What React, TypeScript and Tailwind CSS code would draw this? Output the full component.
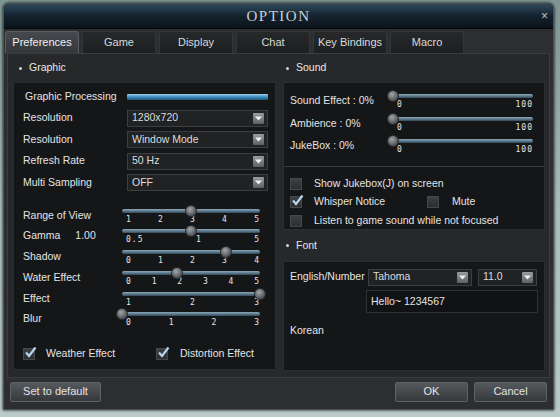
import React from "react";

const tabs = ["Preferences", "Game", "Display", "Chat", "Key Bindings", "Macro"];

const Arrow = () => (
  <div className="w-[11px] h-[11px] rounded-[1px] bg-gradient-to-b from-[#9a9ca0] to-[#5d6064] flex items-center justify-center">
    <svg width="7" height="5" viewBox="0 0 7 5">
      <path d="M0 0.5 L7 0.5 L3.5 4.5 Z" fill="#f2f2f2" />
    </svg>
  </div>
);

const Dropdown = ({ value, className }: { value: string; className: string }) => (
  <div
    className={`h-[17px] flex items-center justify-between pl-[4px] pr-[3px] bg-[#202224] border border-[#3c3f42] text-[#dcdcdc] ${className}`}
  >
    <span>{value}</span>
    <Arrow />
  </div>
);

const Check = ({ checked }: { checked: boolean }) => (
  <div className="w-[12px] h-[12px] bg-gradient-to-b from-[#3c3f43] to-[#2c2e31] border border-[#45484c] relative shrink-0">
    {checked && (
      <svg className="absolute left-[0px] top-[-3px]" width="13" height="13" viewBox="0 0 13 13">
        <path d="M2 6.5 L5 10 L11.5 1.5" stroke="#b9d4ea" strokeWidth="2.2" fill="none" />
      </svg>
    )}
  </div>
);

const Slider = ({
  pos,
  labels,
  width,
}: {
  pos: number;
  labels: string[];
  width: number;
}) => (
  <div className="relative shrink-0" style={{ width }}>
    <div className="h-[4px] mt-[5px] rounded-full bg-gradient-to-b from-[#8fa9bb] via-[#5d7a8e] to-[#34495a]" />
    <div
      className="absolute top-[1px] w-[12px] h-[12px] rounded-full bg-[radial-gradient(circle_at_40%_35%,#a3a5a8,#5b5e62_60%,#3b3d40)] border border-[#2a2c2e]"
      style={{ left: `calc(${pos * 100}% - 6px)` }}
    />
    <div className="flex justify-between pl-[4px] pr-[0px] mt-[3px] text-[8px] leading-[8px] tracking-[1px] text-[#e6e6e6] font-['DejaVu_Sans_Mono',monospace]">
      {labels.map((l, i) => (
        <span key={i}>{l}</span>
      ))}
    </div>
  </div>
);

const SliderRow = ({
  label,
  extra,
  pos,
  labels,
}: {
  label: string;
  extra?: string;
  pos: number;
  labels: string[];
}) => (
  <div className="h-[20.8px] flex items-start">
    <div className="w-[99px] pt-[4px] flex">
      <span>{label}</span>
      {extra && <span className="ml-[15px]">{extra}</span>}
    </div>
    <Slider pos={pos} labels={labels} width={138} />
  </div>
);

const SoundRow = ({ label }: { label: string }) => (
  <div className="h-[22.5px] flex items-start">
    <div className="w-[103px] pt-[4px]">{label}</div>
    <Slider pos={0} labels={["0", "100"]} width={140} />
  </div>
);

const Header = ({ title, pad }: { title: string; pad: string }) => (
  <div className={`h-[28px] flex items-center text-[#e8e8e8] ${pad}`}>
    <span className="w-[3px] h-[3px] bg-[#cfd3d6] rounded-full mr-[7px]" />
    {title}
  </div>
);

export default function App() {
  return (
    <div className="w-[560px] h-[417px] overflow-hidden bg-gradient-to-b from-[#7d9490] via-[#a9bdb8] to-[#b9cac8] pt-[3px] pl-[3px] font-['Liberation_Sans',Arial,sans-serif] text-[10.5px] text-[#e4e4e4]">
      <div className="w-[551px] h-[407px] rounded-t-[6px] bg-[#2c2e30] border border-[#4d5054] shadow-[0_0_3px_#000] flex flex-col">
        {/* title bar */}
        <div className="h-[25px] rounded-t-[5px] bg-gradient-to-b from-[#2f4a5d] via-[#14222e] to-[#0b131a] border-b border-[#05080b] relative flex items-center justify-center">
          <span className="font-['Liberation_Serif',serif] text-[15px] tracking-[1.5px] text-[#c9ced2]">OPTION</span>
          <span className="absolute right-[5px] top-[3px] text-[12px] text-[#bfc4c8]">×</span>
        </div>

        {/* tabs */}
        <div className="h-[23px] mt-[1px] flex gap-[3px] pl-[1px] items-end">
          {tabs.map((t, i) => (
            <div
              key={t}
              className={`w-[74px] h-[22px] flex items-center justify-center text-[11px] rounded-t-[3px] border border-b-0 ${
                i === 0
                  ? "bg-gradient-to-b from-[#45484c] to-[#35383b] border-[#5a5d61] text-[#f0f0f0]"
                  : "bg-gradient-to-b from-[#26282a] to-[#1d1f21] border-[#33363a] text-[#d8d8d8]"
              }`}
            >
              {t}
            </div>
          ))}
        </div>

        {/* content */}
        <div className="h-[325px] mx-[3px] bg-[#26282a] border border-[#3a3d40] flex">
          {/* left */}
          <div className="w-[268px] pl-[5px] flex flex-col">
            <Header title="Graphic" pad="pl-[6px]" />
            <div className="h-[288px] bg-[#151618] border border-[#2b2d30] pl-[9px] pt-[3px]">
              <div className="h-[21.5px] flex items-center">
                <span className="w-[104px] pl-[2px]">Graphic Processing</span>
                <div className="w-[141px] h-[6px] rounded-[1px] bg-gradient-to-b from-[#9fd3ef] via-[#3a8cbd] to-[#1f5678]" />
              </div>
              {[
                ["Resolution", "1280x720"],
                ["Resolution", "Window Mode"],
                ["Refresh Rate", "50 Hz"],
                ["Multi Sampling", "OFF"],
              ].map(([l, v], i) => (
                <div key={i} className="h-[21.5px] flex items-center">
                  <span className="w-[104px]">{l}</span>
                  <Dropdown value={v} className="w-[141px]" />
                </div>
              ))}
              <div className="h-[10px]" />
              <SliderRow label="Range of View" pos={0.5} labels={["1", "2", "3", "4", "5"]} />
              <SliderRow label="Gamma" extra="1.00" pos={0.5} labels={["0.5", "1", "5"]} />
              <SliderRow label="Shadow" pos={0.75} labels={["0", "1", "2", "3", "4"]} />
              <SliderRow label="Water Effect" pos={0.4} labels={["0", "1", "2", "3", "4", "5"]} />
              <SliderRow label="Effect" pos={1} labels={["1", "2", "3"]} />
              <SliderRow label="Blur" pos={0} labels={["0", "1", "2", "3"]} />
              <div className="mt-[18px] flex items-center">
                <Check checked />
                <span className="ml-[11px] w-[110px]">Weather Effect</span>
                <Check checked />
                <span className="ml-[12px]">Distortion Effect</span>
              </div>
            </div>
          </div>

          {/* right */}
          <div className="w-[262px] ml-[7px] flex flex-col">
            <Header title="Sound" pad="pl-[3px]" />
            <div className="bg-[#151618] border border-[#2b2d30]">
              <div className="h-[84px] pl-[6px] pt-[6px] border-b border-[#3a3d40]">
                <SoundRow label="Sound Effect : 0%" />
                <SoundRow label="Ambience : 0%" />
                <SoundRow label="JukeBox : 0%" />
              </div>
              <div className="h-[62px] pl-[6px] pt-[8px]">
                <div className="h-[18px] flex items-center">
                  <Check checked={false} />
                  <span className="ml-[12px]">Show Jukebox(J) on screen</span>
                </div>
                <div className="h-[18px] flex items-center">
                  <Check checked />
                  <span className="ml-[12px] w-[113px]">Whisper Notice</span>
                  <Check checked={false} />
                  <span className="ml-[13px]">Mute</span>
                </div>
                <div className="h-[19px] flex items-center">
                  <Check checked={false} />
                  <span className="ml-[12px]">Listen to game sound while not focused</span>
                </div>
              </div>
            </div>
            <div className="h-[31px] flex items-center pl-[3px]">
              <span className="w-[3px] h-[3px] bg-[#cfd3d6] rounded-full mr-[7px]" />
              Font
            </div>
            <div className="h-[110px] bg-[#151618] border border-[#2b2d30] pl-[6px] pt-[6px]">
              <div className="flex items-center h-[18px]">
                <span className="w-[78px]">English/Number</span>
                <Dropdown value="Tahoma" className="w-[104px]" />
                <Dropdown value="11.0" className="w-[59px] ml-[6px]" />
              </div>
              <div className="ml-[76px] mt-[4px] w-[172px] h-[23px] border border-[#2f3235] bg-[#111214] flex items-center pl-[4px]">
                Hello~ 1234567
              </div>
              <div className="mt-[10px]">Korean</div>
            </div>
          </div>
        </div>

        {/* bottom */}
        <div className="flex-1 flex items-center px-[6px] pb-[4px] text-[11px]">
          <div className="w-[91px] h-[20px] flex items-center justify-center rounded-[2px] bg-gradient-to-b from-[#55595d] to-[#36393c] border border-[#5f6367]">
            Set to default
          </div>
          <div className="flex-1" />
          <div className="w-[73px] h-[20px] flex items-center justify-center rounded-[2px] bg-gradient-to-b from-[#55595d] to-[#36393c] border border-[#5f6367]">
            OK
          </div>
          <div className="w-[73px] h-[20px] ml-[6px] flex items-center justify-center rounded-[2px] bg-gradient-to-b from-[#55595d] to-[#36393c] border border-[#5f6367]">
            Cancel
          </div>
        </div>
      </div>
    </div>
  );
}
